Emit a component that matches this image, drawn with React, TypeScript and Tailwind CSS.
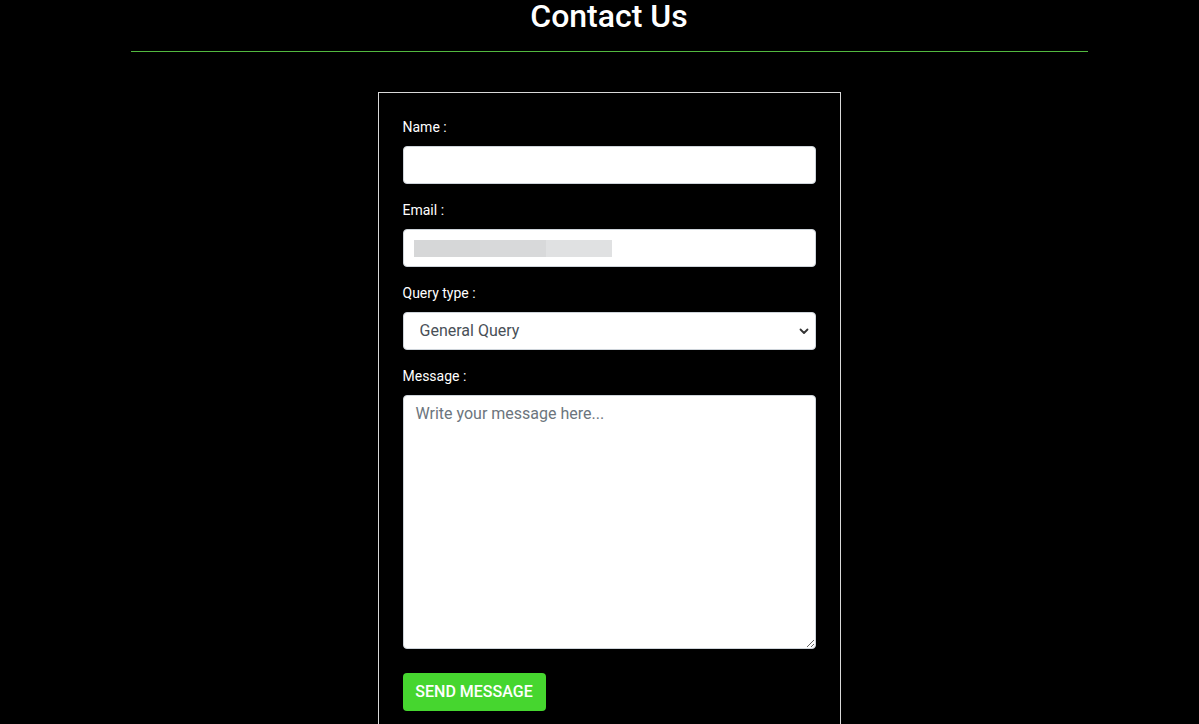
import { useState } from 'react';

/* ── Contact page ─────────────────────────────────────────── */
export default function App() {
  const [query, setQuery] = useState('general');

  return (
    <div className="min-h-screen bg-black pl-[19px] text-white" style={{ fontFamily: 'Roboto, "Noto Sans", sans-serif' }}>
      {/* Heading */}
      <div className="mx-auto w-[957px]">
        <h1 className="text-center text-[32px] font-medium leading-[32px]">Contact Us</h1>
        <div className="mt-[19px] h-px bg-[#52b93f]" />
      </div>

      {/* Form card */}
      <div className="flex justify-center pt-[40px]">
        <form
          className="box-border flex w-[463px] flex-col border border-[#d9d9d9] px-6 pt-[24px] pb-[24px]"
          onSubmit={(e) => e.preventDefault()}
        >
          <label className="mb-[9px] text-sm leading-5">Name :</label>
          <input
            type="text"
            className="h-[38px] rounded-[4px] border border-[#ced4da] bg-white px-3 text-base text-[#212529] outline-none"
          />

          <label className="mt-[16px] mb-[9px] text-sm leading-5">Email :</label>
          <div className="relative">
            <input
              type="email"
              className="h-[38px] w-full rounded-[4px] border border-[#ced4da] bg-white px-3 text-base text-[#212529] outline-none"
            />
            {/* redacted autofill value */}
            <div className="pointer-events-none absolute top-[11px] left-[11px] flex h-[17px]">
              <div className="w-[66px] bg-[#d6d7d8]" />
              <div className="w-[66px] bg-[#d8d9da]" />
              <div className="w-[66px] bg-[#e0e1e2]" />
            </div>
          </div>

          <label className="mt-[16px] mb-[9px] text-sm leading-5">Query type :</label>
          <div className="relative">
            <select
              value={query}
              onChange={(e) => setQuery(e.target.value)}
              className="h-[38px] w-full appearance-none rounded-[4px] border border-[#ced4da] bg-white pl-4 text-base text-[#495057] outline-none"
            >
              <option value="general">General Query</option>
              <option value="support">Support</option>
              <option value="feedback">Feedback</option>
            </select>
            <svg
              className="pointer-events-none absolute top-1/2 right-[6px] -translate-y-1/2"
              width="12"
              height="12"
              viewBox="0 0 12 12"
              fill="none"
            >
              <path d="M2.5 4.5 6 8l3.5-3.5" stroke="#333" strokeWidth="1.8" strokeLinecap="round" strokeLinejoin="round" />
            </svg>
          </div>

          <label className="mt-[16px] mb-[9px] text-sm leading-5">Message :</label>
          <textarea
            placeholder="Write your message here..."
            className="h-[254px] rounded-[4px] border border-[#ced4da] bg-white px-3 py-[6px] text-base text-[#212529] outline-none placeholder:text-[#6c757d]"
          />

          <div className="mt-[24px]">
            <button
              type="submit"
              className="h-[38px] w-[143px] rounded-[4px] bg-[#46d62f] text-center text-base font-medium leading-[38px] text-white"
            >
              SEND MESSAGE
            </button>
          </div>
        </form>
      </div>
    </div>
  );
}
